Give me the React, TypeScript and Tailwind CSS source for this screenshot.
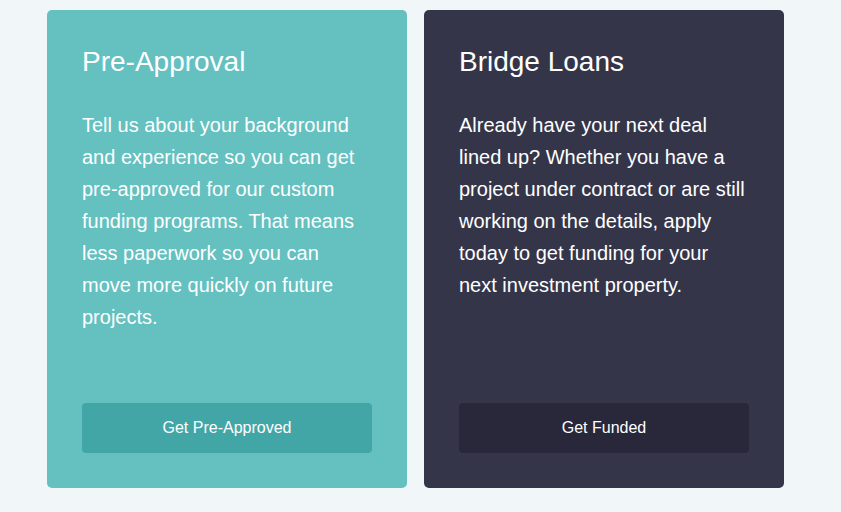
import React from 'react';

type Card = {
  title: string;
  body: string;
  cta: string;
  bg: string;
  btn: string;
};

const CARDS: Card[] = [
  {
    title: 'Pre-Approval',
    body: 'Tell us about your background and experience so you can get pre-approved for our custom funding programs. That means less paperwork so you can move more quickly on future projects.',
    cta: 'Get Pre-Approved',
    bg: 'bg-[#65c0c0]',
    btn: 'bg-[#42a6a7]',
  },
  {
    title: 'Bridge Loans',
    body: 'Already have your next deal lined up? Whether you have a project under contract or are still working on the details, apply today to get funding for your next investment property.',
    cta: 'Get Funded',
    bg: 'bg-[#35354a]',
    btn: 'bg-[#28283a]',
  },
];

const App: React.FC = () => {
  return (
    <div className="min-h-screen w-[841px] h-[512px] bg-[#f1f6f9] font-['Liberation_Sans',Arial,sans-serif] text-white">
      <div className="flex gap-[17px] pl-[47px] pt-[10px]">
        {CARDS.map((c) => (
          <div
            key={c.title}
            className={`${c.bg} w-[360px] h-[478px] rounded-[5px] px-[35px] pt-[36px] pb-[35px] flex flex-col`}
          >
            <h2 className="text-[28px] leading-[32px]">{c.title}</h2>
            <p className="mt-[31px] text-[20px] leading-[32px]">{c.body}</p>
            <button
              className={`${c.btn} mt-auto h-[50px] w-full rounded-[4px] text-[16px] text-white`}
            >
              {c.cta}
            </button>
          </div>
        ))}
      </div>
    </div>
  );
};

export default App;
